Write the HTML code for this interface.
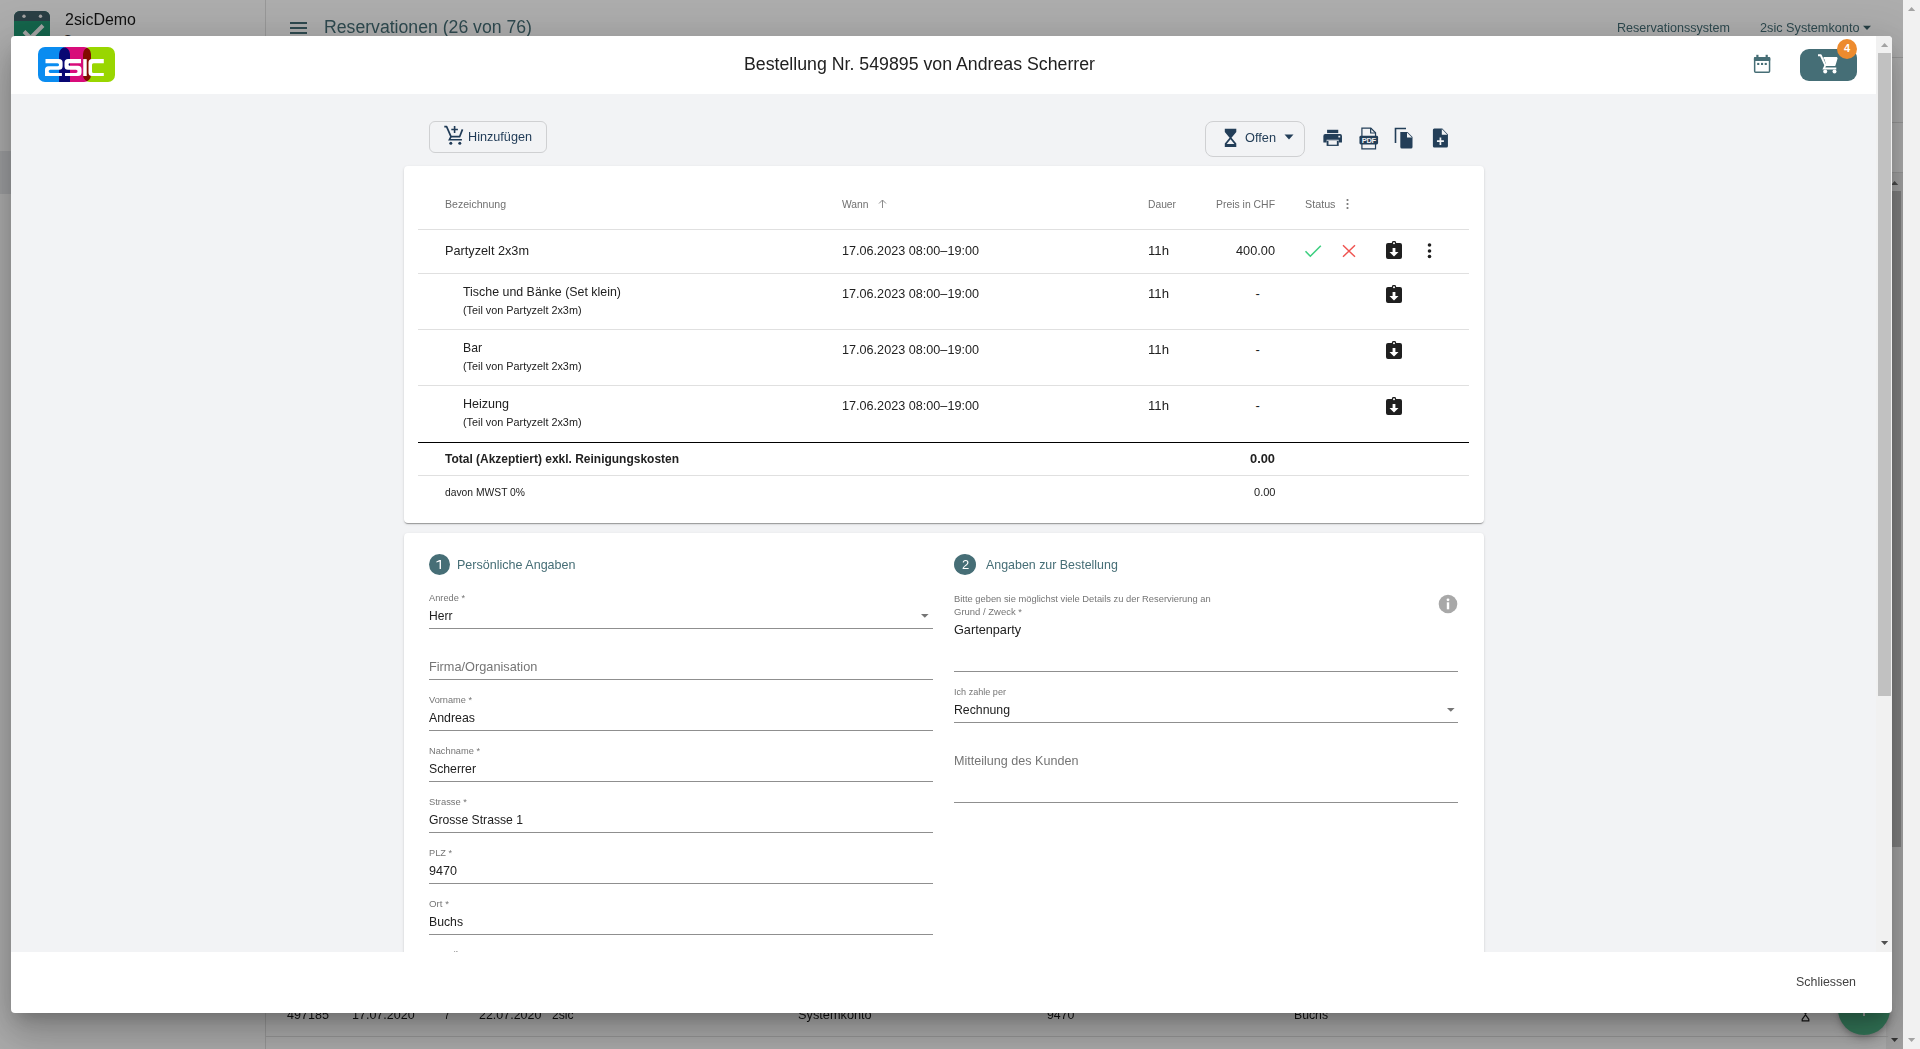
<!DOCTYPE html>
<html><head><meta charset="utf-8"><title>Bestellung</title>
<style>
html,body{margin:0;padding:0;width:1920px;height:1049px;overflow:hidden;background:#fafafa;font-family:"Liberation Sans",sans-serif;}
.t{position:absolute;white-space:nowrap;transform-origin:0 0;}
</style></head><body>
<div style="position:absolute;left:0px;top:0px;width:1920px;height:1049px;background:#fff"></div>
<div style="position:absolute;left:265px;top:0px;width:1px;height:1049px;background:#e0e0e0"></div>
<div style="position:absolute;left:0px;top:151px;width:265px;height:43px;background:#e8e9ec"></div>
<svg style="position:absolute;left:14px;top:11px;" width="36" height="36" viewBox="0 0 36 36"><rect x="0" y="0" width="36" height="36" rx="6" fill="#1f9571"/><path d="M0 6a6 6 0 0 1 6-6h24a6 6 0 0 1 6 6v4H0z" fill="#3f5d66"/><circle cx="10" cy="5.3" r="1.7" fill="#f0f0f0"/><circle cx="26.5" cy="5.3" r="1.7" fill="#f0f0f0"/><path d="M10 20.5l6.5 6.5L29 14.5" stroke="#f2f2f2" stroke-width="4" fill="none"/></svg>
<div class="t" style="left:64.50px;top:11.65px;font-size:16px;line-height:16px;color:#1a1a1a;font-weight:400;transform:scaleX(0.9981);">2sicDemo</div>
<div class="t" style="left:63.80px;top:33.84px;font-size:12px;line-height:12px;color:#333;font-weight:400;">S</div>
<div style="position:absolute;left:290px;top:22px;width:17px;height:2px;background:#466e76"></div>
<div style="position:absolute;left:290px;top:27px;width:17px;height:2px;background:#466e76"></div>
<div style="position:absolute;left:290px;top:32px;width:17px;height:2px;background:#466e76"></div>
<div class="t" style="left:323.50px;top:18.36px;font-size:18px;line-height:18px;color:#466e76;font-weight:400;transform:scaleX(0.9805);">Reservationen (26 von 76)</div>
<div class="t" style="left:1617.00px;top:21.49px;font-size:13px;line-height:13px;color:#466e76;font-weight:400;transform:scaleX(0.9655);">Reservationssystem</div>
<div class="t" style="left:1759.50px;top:21.49px;font-size:13px;line-height:13px;color:#466e76;font-weight:400;transform:scaleX(0.9767);">2sic Systemkonto</div>
<svg style="position:absolute;left:1863px;top:25px;" width="8" height="6" viewBox="0 0 8 6"><path d="M0 0.8h8L4 5z" fill="#3a5f66"/></svg>
<div style="position:absolute;left:266px;top:57px;width:1640px;height:1px;background:#e0e0e0"></div>
<div style="position:absolute;left:266px;top:122px;width:1640px;height:1px;background:#e0e0e0"></div>
<div style="position:absolute;left:266px;top:172px;width:1640px;height:1px;background:#e0e0e0"></div>
<div style="position:absolute;left:1886px;top:173px;width:17px;height:876px;background:#f1f1f1"></div>
<div style="position:absolute;left:1888px;top:191px;width:13px;height:656px;background:#bdbdbd"></div>
<svg style="position:absolute;left:1891px;top:180.5px;" width="8" height="5" viewBox="0 0 8 5"><path d="M0 4h7.2L3.6 0z" fill="#6e6e6e"/></svg>
<svg style="position:absolute;left:1891px;top:1038px;" width="8" height="5" viewBox="0 0 8 5"><path d="M0 0h7.2L3.6 4z" fill="#505050"/></svg>
<div style="position:absolute;left:266px;top:1036px;width:1622px;height:1px;background:#e0e0e0"></div>
<div class="t" style="left:287.30px;top:1007.99px;font-size:13px;line-height:13px;color:#1a1a1a;font-weight:400;transform:scaleX(0.9682);">497185</div>
<div class="t" style="left:351.70px;top:1007.99px;font-size:13px;line-height:13px;color:#1a1a1a;font-weight:400;transform:scaleX(0.9621);">17.07.2020</div>
<div class="t" style="left:444.30px;top:1007.99px;font-size:13px;line-height:13px;color:#1a1a1a;font-weight:400;transform:scaleX(0.8298);">7</div>
<div class="t" style="left:479.30px;top:1007.99px;font-size:13px;line-height:13px;color:#1a1a1a;font-weight:400;transform:scaleX(0.9590);">22.07.2020</div>
<div class="t" style="left:551.70px;top:1007.99px;font-size:13px;line-height:13px;color:#1a1a1a;font-weight:400;transform:scaleX(0.9343);">2sic</div>
<div class="t" style="left:798.30px;top:1007.99px;font-size:13px;line-height:13px;color:#1a1a1a;font-weight:400;transform:scaleX(0.9808);">Systemkonto</div>
<div class="t" style="left:1046.50px;top:1007.99px;font-size:13px;line-height:13px;color:#1a1a1a;font-weight:400;transform:scaleX(0.9509);">9470</div>
<div class="t" style="left:1294.00px;top:1007.99px;font-size:13px;line-height:13px;color:#1a1a1a;font-weight:400;transform:scaleX(0.9410);">Buchs</div>
<svg style="position:absolute;left:1801px;top:1010px;" width="9" height="12" viewBox="0 0 9 12"><path d="M1.2 10.8h6.6V9.3L4.5 4.8 1.2 9.3z" stroke="#222" stroke-width="1.2" fill="none"/><path d="M1 1h7L4.5 4.5z" fill="#222"/></svg>
<div style="position:absolute;left:1838px;top:983px;width:52px;height:52px;border-radius:50%;background:#4db083;box-shadow:0 3px 5px -1px rgba(0,0,0,.2),0 6px 10px 0 rgba(0,0,0,.14)"></div>
<div style="position:absolute;left:1862.5px;top:1005px;width:2px;height:11px;background:#eee"></div>
<div style="position:absolute;left:0px;top:0px;width:1903px;height:1049px;background:rgba(0,0,0,.32)"></div>
<div style="position:absolute;left:11px;top:36px;width:1881px;height:977px;border-radius:4px;background:#fff;overflow:hidden;box-shadow:0 11px 15px -7px rgba(0,0,0,.2),0 24px 38px 3px rgba(0,0,0,.14),0 9px 46px 8px rgba(0,0,0,.12)"></div>
<div style="position:absolute;left:11px;top:94px;width:1865px;height:858px;background:#f2f3f5"></div>
<div style="position:absolute;left:1876px;top:36px;width:16px;height:916px;background:#f1f1f1;border-top-right-radius:4px"></div>
<div style="position:absolute;left:1878px;top:53px;width:13px;height:643px;background:#c1c1c1"></div>
<svg style="position:absolute;left:1881px;top:43px;" width="8" height="5" viewBox="0 0 8 5"><path d="M0 4h7.2L3.6 0z" fill="#a3a3a3"/></svg>
<svg style="position:absolute;left:1881px;top:941px;" width="8" height="5" viewBox="0 0 8 5"><path d="M0 0h7.2L3.6 4z" fill="#505050"/></svg>
<div class="t" style="left:743.50px;top:54.56px;font-size:18px;line-height:18px;color:#212121;font-weight:400;transform:scaleX(0.9853);">Bestellung Nr. 549895 von Andreas Scherrer</div>
<svg style="position:absolute;left:38px;top:47px;" width="77" height="35" viewBox="0 0 77 35">
<g style="isolation:isolate">
<path d="M7 0H25A7 7 0 0 1 32 7V35H7A7 7 0 0 1 0 28V7A7 7 0 0 1 7 0z" fill="#0a8cf0"/>
<path d="M28 0H46A7 7 0 0 1 53 7V28A7 7 0 0 1 46 35H21.1V7A7 7 0 0 1 28 0z" fill="#d80c7a" style="mix-blend-mode:multiply"/>
<path d="M52 0H70A7 7 0 0 1 77 7V28A7 7 0 0 1 70 35H52A7 7 0 0 1 45 28V7A7 7 0 0 1 52 0z" fill="#99d600" style="mix-blend-mode:multiply"/>
</g>
<g fill="#fff">
<path d="M7.5 12.1H21A3.6 3.6 0 0 1 24.6 15.7V19.2A3.6 3.6 0 0 1 21 22.8H12.2A1.55 1.55 0 0 0 12.2 25.9H23.9V29H7V22.8A3.5 3.5 0 0 1 10.5 19.3H19.5A1.55 1.55 0 0 0 19.5 16.2H7.5Z"/>
<path d="M43 12.1V16.2H31.8A1.25 1.25 0 0 0 31.8 18.7H40A3.5 3.5 0 0 1 43.5 22.2V25.5A3.5 3.5 0 0 1 40 29H27V25.9H38A1.55 1.55 0 0 0 38 22.8H30A3.5 3.5 0 0 1 26.5 19.3V15.6A3.5 3.5 0 0 1 30 12.1Z"/>
<rect x="45.2" y="12.1" width="3.5" height="16.9"/>
<path d="M65.8 12.1V16.2H55.5A1.5 1.5 0 0 0 54 17.7V24.4A1.5 1.5 0 0 0 55.5 25.9H65.8V29H54A3.5 3.5 0 0 1 50.5 25.5V15.6A3.5 3.5 0 0 1 54 12.1Z"/>
</g></svg>
<svg style="position:absolute;left:1753px;top:54px;" width="18" height="19" viewBox="0 0 18 19"><rect x="1.65" y="3.65" width="14.9" height="14.5" rx="1" fill="none" stroke="#466e76" stroke-width="1.5"/>
<rect x="0.9" y="2.9" width="16.4" height="4.1" rx="1" fill="#466e76"/>
<rect x="3.3" y="0.8" width="2.2" height="2.5" fill="#466e76"/><rect x="12.6" y="0.8" width="2.2" height="2.5" fill="#466e76"/>
<rect x="4.2" y="8.9" width="2.1" height="2.1" fill="#466e76"/><rect x="8" y="8.9" width="2.1" height="2.1" fill="#466e76"/><rect x="11.7" y="8.9" width="2.1" height="2.1" fill="#466e76"/></svg>
<div style="position:absolute;left:1800px;top:49px;width:57px;height:32px;background:#456e76;border-radius:9px"></div>
<svg style="position:absolute;left:1817px;top:54px;" width="21" height="20" viewBox="0 0 21 20"><path d="M1 1.3h2.8l4.5 9.8h9.2l2.1-7h-13" fill="none" stroke="#fff" stroke-width="2" stroke-linejoin="round"/>
<path d="M6.8 3.3h13.2l-2.9 8.1H9.3z" fill="#fff"/>
<path d="M8.3 11.3l-1.5 3.2h12.5" fill="none" stroke="#fff" stroke-width="1.8"/>
<circle cx="8.2" cy="17.5" r="2" fill="#fff"/><circle cx="17.5" cy="17.5" r="2" fill="#fff"/></svg>
<div style="position:absolute;left:1837px;top:39px;width:20px;height:20px;border-radius:50%;background:#ed8b2e"></div>
<div class="t" style="left:1844.00px;top:42.69px;font-size:11px;line-height:11px;color:#fff;font-weight:700;">4</div>
<div style="position:absolute;left:11px;top:94px;width:1865px;height:858px;overflow:hidden;">
<div style="position:absolute;left:418px;top:27px;width:116px;height:30px;border:1px solid #cfd0d2;border-radius:6px"></div>
<svg style="position:absolute;left:432px;top:31px;" width="21" height="21" viewBox="0 0 21 21"><path d="M1.3 1.6h2.3l4.4 10.1h8.6l2.9-7.3" fill="none" stroke="#1f3a56" stroke-width="1.7" stroke-linejoin="round"/>
<path d="M8 11.7l-1.6 3h12.5" fill="none" stroke="#1f3a56" stroke-width="1.6"/>
<path d="M11.6 1v7M8.3 4.5h6.6" stroke="#1f3a56" stroke-width="1.6"/>
<circle cx="7.8" cy="18.3" r="1.5" fill="#1f3a56"/><circle cx="16.8" cy="18.3" r="1.5" fill="#1f3a56"/></svg>
<div class="t" style="left:457.20px;top:35.99px;font-size:13px;line-height:13px;color:#1f3a56;font-weight:400;transform:scaleX(0.9731);">Hinzufügen</div>
<div style="position:absolute;left:1194px;top:27px;width:98px;height:34px;border:1px solid #cfd0d2;border-radius:8px"></div>
<svg style="position:absolute;left:1213px;top:34px;" width="13" height="20" viewBox="0 0 13 20"><path d="M0.8 0.7h11.5V4L7.5 9.8l4.8 5.8v3.4H0.8v-3.4L5.6 9.8 0.8 4z" fill="#233e58"/>
<path d="M2.7 15.9h7.7L6.55 11.2z" fill="#f2f3f5"/></svg>
<div class="t" style="left:1233.50px;top:37.09px;font-size:13px;line-height:13px;color:#233e58;font-weight:400;transform:scaleX(0.9822);">Offen</div>
<svg style="position:absolute;left:1273px;top:40px;" width="10" height="6" viewBox="0 0 10 6"><path d="M0.5 0.5h9L5 5.5z" fill="#233e58"/></svg>
<svg style="position:absolute;left:1311px;top:35px;" width="21" height="18" viewBox="0 0 21 18"><g transform="translate(0.9,0.3) scale(0.93,0.95)"><rect x="4.5" y="0.5" width="12" height="3.5" fill="#233e58"/>
<path d="M2.5 5h16a2 2 0 0 1 2 2v7h-3.5v-3H4v3H0.5V7a2 2 0 0 1 2-2z" fill="#233e58"/>
<rect x="4" y="12" width="13" height="5.5" fill="#233e58"/><rect x="6" y="12.2" width="9" height="4" fill="#f2f3f5"/>
<rect x="16.6" y="6.8" width="2" height="1.8" fill="#f2f3f5"/></g></svg>
<svg style="position:absolute;left:1347px;top:33px;" width="21" height="24" viewBox="0 0 21 24"><g transform="translate(0.9,0.3) scale(0.94,0.95)"><path d="M3.2 0.8h9.5l5 5v17H3.2z" fill="none" stroke="#233e58" stroke-width="1.3"/>
<path d="M12.5 0.8v5.2h5.2" fill="none" stroke="#233e58" stroke-width="1.3"/>
<rect x="0.6" y="9" width="19.8" height="9" rx="1.5" fill="#233e58"/>
<text x="10.5" y="16.6" text-anchor="middle" font-family="Liberation Sans" font-weight="bold" font-size="8" fill="#f2f3f5" letter-spacing="-0.3">PDF</text></g></svg>
<svg style="position:absolute;left:1383px;top:33px;" width="20" height="22" viewBox="0 0 20 22"><path d="M1.5 16V1.5H12" fill="none" stroke="#233e58" stroke-width="1.6"/>
<path d="M6.3 5h7.2l5 5v10a1.5 1.5 0 0 1 -1.5 1.5H7.8a1.5 1.5 0 0 1 -1.5-1.5z" fill="#233e58"/>
<path d="M13 5.5v5h5" fill="#f2f3f5"/></svg>
<svg style="position:absolute;left:1421px;top:34px;" width="17" height="20" viewBox="0 0 17 20"><g transform="translate(0.9,0) scale(0.94,1)"><path d="M1.5 0.5h8.5l6 6v11.5a1.5 1.5 0 0 1 -1.5 1.5H1.5A1.5 1.5 0 0 1 0 18V2A1.5 1.5 0 0 1 1.5 0.5z" fill="#233e58"/>
<path d="M9.5 1v5.8h5.8" fill="#f2f3f5"/>
<path d="M8 9.5v7.5M4.3 13.2h7.4" stroke="#f2f3f5" stroke-width="1.8"/></g></svg>
<div style="position:absolute;left:393px;top:72px;width:1080px;height:357px;background:#fff;border-radius:4px;box-shadow:0 2px 1px -1px rgba(0,0,0,.2),0 1px 1px 0 rgba(0,0,0,.14),0 1px 3px 0 rgba(0,0,0,.12)"></div>
<div class="t" style="left:434.00px;top:104.69px;font-size:11px;line-height:11px;color:#707070;font-weight:400;transform:scaleX(0.9590);">Bezeichnung</div>
<div class="t" style="left:831.30px;top:104.69px;font-size:11px;line-height:11px;color:#707070;font-weight:400;transform:scaleX(0.9355);">Wann</div>
<svg style="position:absolute;left:866px;top:104px;" width="11" height="11" viewBox="0 0 11 11"><path d="M5.5 10V2M2 5.5l3.5-3.5 3.5 3.5" fill="none" stroke="#8a8a8a" stroke-width="1"/></svg>
<div class="t" style="left:1137.30px;top:104.69px;font-size:11px;line-height:11px;color:#707070;font-weight:400;transform:scaleX(0.9345);">Dauer</div>
<div class="t" style="left:1205.00px;top:104.69px;font-size:11px;line-height:11px;color:#707070;font-weight:400;transform:scaleX(0.9464);">Preis in CHF</div>
<div class="t" style="left:1293.70px;top:104.69px;font-size:11px;line-height:11px;color:#707070;font-weight:400;transform:scaleX(0.9780);">Status</div>
<svg style="position:absolute;left:1334px;top:104px;" width="5" height="12" viewBox="0 0 5 12"><circle cx="2.5" cy="2" r="1.1" fill="#757575"/><circle cx="2.5" cy="6" r="1.1" fill="#757575"/><circle cx="2.5" cy="10" r="1.1" fill="#757575"/></svg>
<div style="position:absolute;left:407px;top:135px;width:1051px;height:1px;background:#e0e0e0"></div>
<div class="t" style="left:434.00px;top:149.99px;font-size:13px;line-height:13px;color:#212121;font-weight:400;transform:scaleX(0.9770);">Partyzelt 2x3m</div>
<div class="t" style="left:831.30px;top:149.99px;font-size:13px;line-height:13px;color:#212121;font-weight:400;transform:scaleX(0.9718);">17.06.2023 08:00–19:00</div>
<div class="t" style="left:1137.30px;top:149.99px;font-size:13px;line-height:13px;color:#212121;font-weight:400;transform:scaleX(1.0132);">11h</div>
<div class="t" style="left:1225.00px;top:149.99px;font-size:13px;line-height:13px;color:#212121;font-weight:400;transform:scaleX(0.9808);">400.00</div>
<svg style="position:absolute;left:1293px;top:150px;" width="18" height="14" viewBox="0 0 18 14"><path d="M1.5 7.3l4.8 4.9L16.8 1.8" fill="none" stroke="#3ecf80" stroke-width="1.6"/></svg>
<svg style="position:absolute;left:1330px;top:150px;" width="16" height="14" viewBox="0 0 16 14"><path d="M2 1.2l12 11.6M14 1.2L2 12.8" fill="none" stroke="#ef5350" stroke-width="1.45"/></svg>
<svg style="position:absolute;left:1375px;top:147px;" width="16" height="18" viewBox="0 0 16 18"><path d="M2 2h3.8a2.2 2.2 0 0 1 4.4 0H14a2 2 0 0 1 2 2v12a2 2 0 0 1 -2 2H2a2 2 0 0 1 -2-2V4a2 2 0 0 1 2-2z" fill="#1f1f1f"/>
<circle cx="8" cy="2.3" r="1" fill="#fff"/>
<path d="M6.6 7h2.8v4h3.1L8 15.5 3.5 11h3.1z" fill="#fff"/></svg>
<svg style="position:absolute;left:1416px;top:147px;" width="5" height="19" viewBox="0 0 5 19"><circle cx="2.5" cy="4" r="1.8" fill="#1f1f1f"/><circle cx="2.5" cy="10" r="1.8" fill="#1f1f1f"/><circle cx="2.5" cy="15.5" r="1.8" fill="#1f1f1f"/></svg>
<div style="position:absolute;left:407px;top:179px;width:1051px;height:1px;background:#e0e0e0"></div>
<div class="t" style="left:452.00px;top:190.99px;font-size:13px;line-height:13px;color:#212121;font-weight:400;transform:scaleX(0.9534);">Tische und Bänke (Set klein)</div>
<div class="t" style="left:452.00px;top:210.69px;font-size:11px;line-height:11px;color:#212121;font-weight:400;transform:scaleX(0.9840);">(Teil von Partyzelt 2x3m)</div>
<div class="t" style="left:831.30px;top:192.99px;font-size:13px;line-height:13px;color:#212121;font-weight:400;transform:scaleX(0.9718);">17.06.2023 08:00–19:00</div>
<div class="t" style="left:1137.30px;top:192.99px;font-size:13px;line-height:13px;color:#212121;font-weight:400;transform:scaleX(1.0132);">11h</div>
<div class="t" style="left:1244.50px;top:192.99px;font-size:13px;line-height:13px;color:#212121;font-weight:400;">-</div>
<svg style="position:absolute;left:1375px;top:191px;" width="16" height="18" viewBox="0 0 16 18"><path d="M2 2h3.8a2.2 2.2 0 0 1 4.4 0H14a2 2 0 0 1 2 2v12a2 2 0 0 1 -2 2H2a2 2 0 0 1 -2-2V4a2 2 0 0 1 2-2z" fill="#1f1f1f"/>
<circle cx="8" cy="2.3" r="1" fill="#fff"/>
<path d="M6.6 7h2.8v4h3.1L8 15.5 3.5 11h3.1z" fill="#fff"/></svg>
<div style="position:absolute;left:407px;top:235px;width:1051px;height:1px;background:#e0e0e0"></div>
<div class="t" style="left:452.00px;top:246.99px;font-size:13px;line-height:13px;color:#212121;font-weight:400;transform:scaleX(0.9391);">Bar</div>
<div class="t" style="left:452.00px;top:266.69px;font-size:11px;line-height:11px;color:#212121;font-weight:400;transform:scaleX(0.9840);">(Teil von Partyzelt 2x3m)</div>
<div class="t" style="left:831.30px;top:248.99px;font-size:13px;line-height:13px;color:#212121;font-weight:400;transform:scaleX(0.9718);">17.06.2023 08:00–19:00</div>
<div class="t" style="left:1137.30px;top:248.99px;font-size:13px;line-height:13px;color:#212121;font-weight:400;transform:scaleX(1.0132);">11h</div>
<div class="t" style="left:1244.50px;top:248.99px;font-size:13px;line-height:13px;color:#212121;font-weight:400;">-</div>
<svg style="position:absolute;left:1375px;top:247px;" width="16" height="18" viewBox="0 0 16 18"><path d="M2 2h3.8a2.2 2.2 0 0 1 4.4 0H14a2 2 0 0 1 2 2v12a2 2 0 0 1 -2 2H2a2 2 0 0 1 -2-2V4a2 2 0 0 1 2-2z" fill="#1f1f1f"/>
<circle cx="8" cy="2.3" r="1" fill="#fff"/>
<path d="M6.6 7h2.8v4h3.1L8 15.5 3.5 11h3.1z" fill="#fff"/></svg>
<div style="position:absolute;left:407px;top:291px;width:1051px;height:1px;background:#e0e0e0"></div>
<div class="t" style="left:452.00px;top:302.99px;font-size:13px;line-height:13px;color:#212121;font-weight:400;transform:scaleX(0.9644);">Heizung</div>
<div class="t" style="left:452.00px;top:322.69px;font-size:11px;line-height:11px;color:#212121;font-weight:400;transform:scaleX(0.9840);">(Teil von Partyzelt 2x3m)</div>
<div class="t" style="left:831.30px;top:304.99px;font-size:13px;line-height:13px;color:#212121;font-weight:400;transform:scaleX(0.9718);">17.06.2023 08:00–19:00</div>
<div class="t" style="left:1137.30px;top:304.99px;font-size:13px;line-height:13px;color:#212121;font-weight:400;transform:scaleX(1.0132);">11h</div>
<div class="t" style="left:1244.50px;top:304.99px;font-size:13px;line-height:13px;color:#212121;font-weight:400;">-</div>
<svg style="position:absolute;left:1375px;top:303px;" width="16" height="18" viewBox="0 0 16 18"><path d="M2 2h3.8a2.2 2.2 0 0 1 4.4 0H14a2 2 0 0 1 2 2v12a2 2 0 0 1 -2 2H2a2 2 0 0 1 -2-2V4a2 2 0 0 1 2-2z" fill="#1f1f1f"/>
<circle cx="8" cy="2.3" r="1" fill="#fff"/>
<path d="M6.6 7h2.8v4h3.1L8 15.5 3.5 11h3.1z" fill="#fff"/></svg>
<div style="position:absolute;left:407px;top:348px;width:1051px;height:1px;background:#000"></div>
<div class="t" style="left:434.00px;top:357.99px;font-size:13px;line-height:13px;color:#212121;font-weight:700;transform:scaleX(0.9212);">Total (Akzeptiert) exkl. Reinigungskosten</div>
<div class="t" style="left:1239.00px;top:357.99px;font-size:13px;line-height:13px;color:#212121;font-weight:700;transform:scaleX(0.9881);">0.00</div>
<div style="position:absolute;left:407px;top:381px;width:1051px;height:1px;background:#e0e0e0"></div>
<div class="t" style="left:434.00px;top:392.69px;font-size:11px;line-height:11px;color:#212121;font-weight:400;transform:scaleX(0.9369);">davon MWST 0%</div>
<div class="t" style="left:1242.50px;top:392.69px;font-size:11px;line-height:11px;color:#212121;font-weight:400;transform:scaleX(1.0042);">0.00</div>
<div style="position:absolute;left:393px;top:439px;width:1080px;height:500px;background:#fff;border-radius:4px;box-shadow:0 2px 1px -1px rgba(0,0,0,.2),0 1px 1px 0 rgba(0,0,0,.14),0 1px 3px 0 rgba(0,0,0,.12)"></div>
<div style="position:absolute;left:418px;top:460px;width:21px;height:21px;background:#466e76;border-radius:50%"></div>
<svg style="position:absolute;left:418px;top:460px;" width="21" height="21" viewBox="0 0 21 21"><path d="M10.6 6h1.35v9H10.6V7.5L7.4 8.6V7.4L10.4 6z" fill="#fff"/></svg>
<div class="t" style="left:445.70px;top:464.39px;font-size:13px;line-height:13px;color:#466e76;font-weight:400;transform:scaleX(0.9644);">Persönliche Angaben</div>
<div style="position:absolute;left:943px;top:460px;width:22px;height:21px;background:#466e76;border-radius:50%"></div>
<div class="t" style="left:950.60px;top:464.84px;font-size:12px;line-height:12px;color:#fff;font-weight:400;transform:scaleX(1.0788);">2</div>
<div class="t" style="left:975.10px;top:464.39px;font-size:13px;line-height:13px;color:#466e76;font-weight:400;transform:scaleX(0.9547);">Angaben zur Bestellung</div>
<div class="t" style="left:418.00px;top:498.54px;font-size:9.75px;line-height:9.75px;color:#757575;font-weight:400;transform:scaleX(0.9488);">Anrede *</div>
<div class="t" style="left:418.00px;top:514.99px;font-size:13px;line-height:13px;color:#212121;font-weight:400;transform:scaleX(0.9297);">Herr</div>
<div style="position:absolute;left:418px;top:534px;width:504px;height:1px;background:#8f8f8f"></div>
<svg style="position:absolute;left:910px;top:519.5px;" width="8" height="5" viewBox="0 0 8 5"><path d="M0 0h7.6L3.8 3.8z" fill="#757575"/></svg>
<div class="t" style="left:418.00px;top:565.99px;font-size:13px;line-height:13px;color:#757575;font-weight:400;transform:scaleX(0.9797);">Firma/Organisation</div>
<div style="position:absolute;left:418px;top:585px;width:504px;height:1px;background:#8f8f8f"></div>
<div class="t" style="left:418.00px;top:600.54px;font-size:9.75px;line-height:9.75px;color:#757575;font-weight:400;transform:scaleX(0.9445);">Vorname *</div>
<div class="t" style="left:418.00px;top:616.99px;font-size:13px;line-height:13px;color:#212121;font-weight:400;transform:scaleX(0.9500);">Andreas</div>
<div style="position:absolute;left:418px;top:636px;width:504px;height:1px;background:#8f8f8f"></div>
<div class="t" style="left:418.00px;top:651.54px;font-size:9.75px;line-height:9.75px;color:#757575;font-weight:400;transform:scaleX(0.9505);">Nachname *</div>
<div class="t" style="left:418.00px;top:667.99px;font-size:13px;line-height:13px;color:#212121;font-weight:400;transform:scaleX(0.9428);">Scherrer</div>
<div style="position:absolute;left:418px;top:687px;width:504px;height:1px;background:#8f8f8f"></div>
<div class="t" style="left:418.00px;top:702.54px;font-size:9.75px;line-height:9.75px;color:#757575;font-weight:400;transform:scaleX(0.9606);">Strasse *</div>
<div class="t" style="left:418.00px;top:718.99px;font-size:13px;line-height:13px;color:#212121;font-weight:400;transform:scaleX(0.9360);">Grosse Strasse 1</div>
<div style="position:absolute;left:418px;top:738px;width:504px;height:1px;background:#8f8f8f"></div>
<div class="t" style="left:418.00px;top:753.54px;font-size:9.75px;line-height:9.75px;color:#757575;font-weight:400;transform:scaleX(0.9432);">PLZ *</div>
<div class="t" style="left:418.00px;top:769.99px;font-size:13px;line-height:13px;color:#212121;font-weight:400;transform:scaleX(0.9682);">9470</div>
<div style="position:absolute;left:418px;top:789px;width:504px;height:1px;background:#8f8f8f"></div>
<div class="t" style="left:418.00px;top:804.54px;font-size:9.75px;line-height:9.75px;color:#757575;font-weight:400;transform:scaleX(0.9979);">Ort *</div>
<div class="t" style="left:418.00px;top:820.99px;font-size:13px;line-height:13px;color:#212121;font-weight:400;transform:scaleX(0.9410);">Buchs</div>
<div style="position:absolute;left:418px;top:840px;width:504px;height:1px;background:#8f8f8f"></div>
<div class="t" style="left:418.00px;top:855.74px;font-size:9.75px;line-height:9.75px;color:#757575;font-weight:400;transform:scaleX(1.0548);">E-Mail *</div>
<div class="t" style="left:943.00px;top:499.74px;font-size:9.75px;line-height:9.75px;color:#757575;font-weight:400;transform:scaleX(0.9588);">Bitte geben sie möglichst viele Details zu der Reservierung an</div>
<div class="t" style="left:943.00px;top:512.74px;font-size:9.75px;line-height:9.75px;color:#757575;font-weight:400;transform:scaleX(0.9729);">Grund / Zweck *</div>
<div class="t" style="left:943.00px;top:528.99px;font-size:13px;line-height:13px;color:#212121;font-weight:400;transform:scaleX(0.9760);">Gartenparty</div>
<div style="position:absolute;left:943px;top:577px;width:504px;height:1px;background:#8f8f8f"></div>
<svg style="position:absolute;left:1426.6px;top:500px;" width="20" height="20" viewBox="0 0 20 20"><circle cx="10" cy="10" r="9.3" fill="#a8a8a8"/><circle cx="10" cy="5.8" r="1.4" fill="#fff"/><rect x="8.8" y="8.3" width="2.4" height="7" fill="#fff"/></svg>
<div class="t" style="left:943.00px;top:592.54px;font-size:9.75px;line-height:9.75px;color:#757575;font-weight:400;transform:scaleX(0.9315);">Ich zahle per</div>
<div class="t" style="left:943.00px;top:608.99px;font-size:13px;line-height:13px;color:#212121;font-weight:400;transform:scaleX(0.9448);">Rechnung</div>
<div style="position:absolute;left:943px;top:628px;width:504px;height:1px;background:#8f8f8f"></div>
<svg style="position:absolute;left:1436.3px;top:614px;" width="8" height="5" viewBox="0 0 8 5"><path d="M0 0h7.6L3.8 3.8z" fill="#757575"/></svg>
<div class="t" style="left:943.00px;top:659.99px;font-size:13px;line-height:13px;color:#757575;font-weight:400;transform:scaleX(0.9678);">Mitteilung des Kunden</div>
<div style="position:absolute;left:943px;top:708px;width:504px;height:1px;background:#8f8f8f"></div>
</div>
<div class="t" style="left:1796.00px;top:974.99px;font-size:13px;line-height:13px;color:#424242;font-weight:400;transform:scaleX(0.9544);">Schliessen</div>
<div style="position:absolute;left:1903px;top:0px;width:17px;height:1049px;background:#f1f1f1"></div>
<svg style="position:absolute;left:1908px;top:7px;" width="8" height="5" viewBox="0 0 8 5"><path d="M0 4h7.2L3.6 0z" fill="#a3a3a3"/></svg>
<svg style="position:absolute;left:1908px;top:1038px;" width="8" height="5" viewBox="0 0 8 5"><path d="M0 0h7.2L3.6 4z" fill="#a3a3a3"/></svg>
</body></html>
